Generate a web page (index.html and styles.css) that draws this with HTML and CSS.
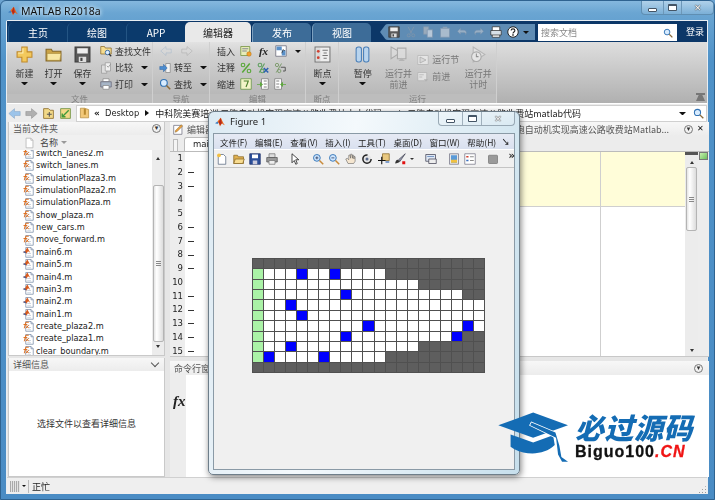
FILE: index.html
```html
<!DOCTYPE html>
<html lang="zh">
<head>
<meta charset="utf-8">
<title>MATLAB R2018a</title>
<link rel="stylesheet" href="styles.css">
</head>
<body>
<svg class="defs" xmlns="http://www.w3.org/2000/svg">
  <symbol id="logo" viewBox="0 0 16 16"><path d="M0 10l4-3 2 1.500L4 11z" fill="#3f7fc0"/><path d="M4 7l5-6c2 2 3 8 7 12-3-1-4-2-5-3l-3 5c-1-3-2-6-4-8z" fill="#e8641c"/><path d="M9 1c-1 3-2 5-3 7.500L8 13l3-3C10 7 10 4 9 1z" fill="#b5291a"/></symbol>
  <symbol id="plus" viewBox="0 0 16 16"><path d="M5.500 1h5v4.500H15v5h-4.500V15h-5v-4.500H1v-5h4.500z" fill="#f3c95c" stroke="#c08a2c"/><path d="M6.500 2v4.500H2" fill="none" stroke="#fdf0b8"/></symbol>
  <symbol id="folder" viewBox="0 0 16 16"><path d="M1 3h5l1 2h8v9H1z" fill="#caa347" stroke="#85682a"/><path d="M2 7h13l-1 6.500H2z" fill="#f8e7a4" stroke="#a98a3c" stroke-width=".6"/></symbol>
  <symbol id="floppy" viewBox="0 0 16 16"><path d="M1 1h14v14H1z" fill="#5a5a5a" stroke="#3a3a3a"/><path d="M3 2h10v5H3z" fill="#eee"/><path d="M4.500 10h7v5h-7z" fill="#ddd"/><path d="M6 11h2v3H6z" fill="#444"/></symbol>
  <symbol id="findfile" viewBox="0 0 16 16"><path d="M1 2h5l1 2h8v8H1z" fill="#f5dc90" stroke="#8a6a28"/><circle cx="10" cy="10" r="3" fill="#dfefff" stroke="#3c6ea8" stroke-width="1.300"/><path d="M12 12l3 3" stroke="#333" stroke-width="1.600"/></symbol>
  <symbol id="compare" viewBox="0 0 16 16"><path d="M2 4h7v11H2z" fill="#ddd" stroke="#999"/><path d="M7 1h7v11H7z" fill="#f0f0f0" stroke="#999"/><path d="M9 5l2 2 3-4" fill="none" stroke="#888"/></symbol>
  <symbol id="printer" viewBox="0 0 16 16"><path d="M4 1h8v4H4z" fill="#fff" stroke="#888"/><path d="M1 5h14v7H1z" fill="#a7b5c6" stroke="#667"/><path d="M4 10h8v5H4z" fill="#fff" stroke="#888"/></symbol>
  <symbol id="back" viewBox="0 0 16 16"><path d="M1 8l7-6v3.500h7v5H8V14z" fill="currentColor" stroke="#7f9fc0" stroke-width=".6"/></symbol>
  <symbol id="fwd" viewBox="0 0 16 16"><path d="M15 8L8 2v3.500H1v5h7V14z" fill="currentColor" stroke="#888" stroke-width=".6"/></symbol>
  <symbol id="goto" viewBox="0 0 16 16"><path d="M9 2h6v12H9z" fill="#f4f4f4" stroke="#888"/><path d="M1 6h5V3l5 5-5 5v-3H1z" fill="#4b8cd0" stroke="#2a5f9c" stroke-width=".6"/></symbol>
  <symbol id="mag" viewBox="0 0 16 16"><circle cx="6.500" cy="6.500" r="4.500" fill="#d8ecff" stroke="#3273b5" stroke-width="1.500"/><path d="M10 10l5 5" stroke="#8a6a3a" stroke-width="2"/></symbol>
  <symbol id="insert" viewBox="0 0 16 16"><path d="M1 2h12v12H1z" fill="#e6ecb8" stroke="#6f8f3a"/><path d="M3 5h8M3 8h6" stroke="#668" fill="none"/><circle cx="12" cy="12" r="3" fill="#f2a02c" stroke="#b06a10" stroke-width=".6"/></symbol>
  <symbol id="block" viewBox="0 0 16 16"><path d="M1 1h14v14H1z" fill="#fff" stroke="#667"/><path d="M2 2h7v5H2zM9 7h5v7H9z" fill="#5a90c8"/><path d="M9 11l2-5 2 2" stroke="#333" fill="none"/></symbol>
  <symbol id="pct" viewBox="0 0 16 16"><circle cx="4" cy="4" r="2.400" fill="none" stroke="currentColor" stroke-width="1.500"/><circle cx="12" cy="12" r="2.400" fill="none" stroke="currentColor" stroke-width="1.500"/><path d="M13 2L3 14" stroke="currentColor" stroke-width="2"/></symbol>
  <symbol id="pctx" viewBox="0 0 16 16"><circle cx="4" cy="4" r="2.400" fill="none" stroke="#5fa05f" stroke-width="1.400"/><circle cx="7" cy="12" r="2.400" fill="none" stroke="#5fa05f" stroke-width="1.400"/><path d="M10 2L3 14" stroke="#5fa05f" stroke-width="1.500"/><path d="M9 8l6 6m0-6l-6 6" stroke="#2c62b0" stroke-width="2"/></symbol>
  <symbol id="wrap" viewBox="0 0 16 16"><circle cx="4" cy="4" r="2.200" fill="none" stroke="#7a9a6a" stroke-width="1.200"/><circle cx="7" cy="12" r="2.200" fill="none" stroke="#7a9a6a" stroke-width="1.200"/><path d="M10 2L3 14" stroke="#7a9a6a" stroke-width="1.300"/><path d="M9 7h6v5h-3" fill="none" stroke="#555" stroke-width="1.300"/></symbol>
  <symbol id="smart" viewBox="0 0 16 16"><path d="M1 1h14v14H1z" fill="#f2f4c8" stroke="#5f8f3f"/><path d="M5 4h6l-1 3-2 5" fill="none" stroke="#4a7f2a" stroke-width="1.500"/></symbol>
  <symbol id="indent" viewBox="0 0 16 16"><path d="M6 1h9v14H6z" fill="#fff" stroke="#777"/><path d="M9 4h4M9 8h4M9 12h4" stroke="#555"/><path d="M0 8h4V5l4 3.500L4 12V9H0z" fill="#5fa83f"/></symbol>
  <symbol id="outdent" viewBox="0 0 16 16"><path d="M1 1h9v14H1z" fill="#fff" stroke="#777"/><path d="M3 4h4M3 8h4M3 12h4" stroke="#555"/><path d="M16 8h-4V5L8 8.500l4 3.500V9h4z" fill="#5fa83f"/></symbol>
  <symbol id="bp" viewBox="0 0 16 16"><path d="M1 1h14v14H1z" fill="#eee" stroke="#777"/><path d="M2 2h4v12H2z" fill="#d8d8d8"/><circle cx="4" cy="5" r="1.300" fill="#d04030"/><circle cx="4" cy="11" r="1.300" fill="#d04030"/><path d="M8 4h5M9 6.500h3M8 9h5M9 11.500h3" stroke="#777"/></symbol>
  <symbol id="pause" viewBox="0 0 16 16"><rect x="2" y="1" width="5" height="14" rx="2" fill="#b8d4ee" stroke="#4a7fb8"/><rect x="9" y="1" width="5" height="14" rx="2" fill="#b8d4ee" stroke="#4a7fb8"/></symbol>
  <symbol id="runadv" viewBox="0 0 16 16"><path d="M1 1l9 5-9 6z" fill="#dcdcdc" stroke="#999"/><path d="M7 2h8v10H7z" fill="#ddd" stroke="#999"/><path d="M8 14h6l-3-3z" fill="#aaa"/></symbol>
  <symbol id="runsec" viewBox="0 0 16 16"><path d="M1 2h14v12H1z" fill="#eee" stroke="#aaa"/><path d="M4 4l8 4-8 4z" fill="#ddd" stroke="#999"/></symbol>
  <symbol id="advance" viewBox="0 0 16 16"><path d="M1 2h12v11H1z" fill="#eee" stroke="#aaa"/><path d="M3 5h6M3 8h4" stroke="#aaa"/><path d="M9 11h6l-3 3z" fill="#aaa"/></symbol>
  <symbol id="runtime" viewBox="0 0 16 16"><path d="M3 1l11 7-11 7z" fill="#e6e6e6" stroke="#aaa"/><circle cx="6" cy="10" r="4.500" fill="#eee" stroke="#999"/><path d="M6 7v3h2" fill="none" stroke="#777"/></symbol>
  <symbol id="cut" viewBox="0 0 16 16"><path d="M4 1l5 9M12 1L7 10" stroke="#7c94ad" stroke-width="1.300"/><circle cx="5" cy="12.500" r="2" fill="none" stroke="#7c94ad" stroke-width="1.300"/><circle cx="11" cy="12.500" r="2" fill="none" stroke="#7c94ad" stroke-width="1.300"/></symbol>
  <symbol id="copy" viewBox="0 0 16 16"><path d="M2 1h7v10H2z" fill="#9ab" stroke="#7c94ad"/><path d="M7 5h7v10H7z" fill="#b7c7d8" stroke="#7c94ad"/></symbol>
  <symbol id="paste" viewBox="0 0 16 16"><path d="M2 3h12v12H2z" fill="#a9bbcd" stroke="#7c94ad"/><path d="M5 1h6v3H5z" fill="#8ba0b5"/></symbol>
  <symbol id="undo" viewBox="0 0 16 16"><path d="M6 3L2 7l4 4V8.500h4c2 0 3 1 3 3 2-4 0-6-3-6H6z" fill="#9ab0c6" stroke="#7c94ad" stroke-width=".6"/></symbol>
  <symbol id="redo" viewBox="0 0 16 16"><path d="M10 3l4 4-4 4V8.500H6c-2 0-3 1-3 3-2-4 0-6 3-6h4z" fill="#9ab0c6" stroke="#7c94ad" stroke-width=".6"/></symbol>
  <symbol id="qaprint" viewBox="0 0 16 16"><path d="M3 1h10v14H3z" fill="#fff" stroke="#333"/><path d="M1 6h14v6H1z" fill="#d8e0e8" stroke="#333"/></symbol>
  <symbol id="help" viewBox="0 0 16 16"><circle cx="8" cy="8" r="7" fill="#fff" stroke="#222" stroke-width="1.300"/><path d="M5.500 6c0-3 5-3 5 0 0 2-2.500 2-2.500 4" fill="none" stroke="#222" stroke-width="1.500"/><path d="M7 11h2v2H7z" fill="#222"/></symbol>
  <symbol id="up" viewBox="0 0 16 16"><path d="M2 2h6l2 2h4v10H2z" fill="#f2d987" stroke="#8a6a28"/><path d="M6 9h6M9 6v6" stroke="#555" stroke-width="1.300"/></symbol>
  <symbol id="tree" viewBox="0 0 16 16"><path d="M2 2h12v12H2z" fill="#f2d987" stroke="#6a8f3a"/><path d="M12 4L4 12M4 8v4h4" fill="none" stroke="#3f9a3a" stroke-width="1.700"/></symbol>
  <symbol id="crumb" viewBox="0 0 16 16"><path d="M2 1h6l6 2v12H2z" fill="#f2c878" stroke="#b08838"/><path d="M7 1v10l2-1 1 1V2" fill="#b88a30"/></symbol>
  <symbol id="page" viewBox="0 0 16 16"><path d="M3 1h7l3 3v11H3z" fill="#fff" stroke="#aaa"/><path d="M10 1v3h3" fill="none" stroke="#aaa"/></symbol>
  <symbol id="mfn" viewBox="0 0 16 16"><path d="M5 2h7l3 3v10H5z" fill="#fff" stroke="#7a8ca8"/><path d="M12 2v3h3" fill="none" stroke="#7a8ca8"/><path d="M7 7h3M7 10h5M7 13h5" stroke="#b9c5d6"/><path d="M3 11l2-8h4M2 6h5M5 7l4 4m0-4l-4 4" fill="none" stroke="#e07020" stroke-width="1.300"/></symbol>
  <symbol id="msc" viewBox="0 0 16 16"><path d="M5 2h7l3 3v10H5z" fill="#fff" stroke="#7a8ca8"/><path d="M12 2v3h3" fill="none" stroke="#7a8ca8"/><path d="M7 10h5M7 13h5" stroke="#b9c5d6"/><path d="M1 8l3-1 3-5c1 1 2 4 4 7L8 7l-2 3z" fill="#d85a1c"/><path d="M1 8l3-1 2 3z" fill="#2a5fb0"/></symbol>
  <symbol id="edit" viewBox="0 0 16 16"><path d="M1 2h12v13H1z" fill="#fff" stroke="#667"/><path d="M3 12l1-3 8-8 2 2-8 8z" fill="#e8a040" stroke="#7a5a20" stroke-width=".6"/></symbol>
  <symbol id="fnew" viewBox="0 0 16 16"><path d="M3 2h7l3 3v10H3z" fill="#fff" stroke="#5a6a80"/><circle cx="4" cy="3" r="2.500" fill="#f4c040"/></symbol>
  <symbol id="fopen" viewBox="0 0 16 16"><path d="M1 3h5l1 2h7v9H1z" fill="#e0b050" stroke="#8a6a28"/><path d="M1 14l2-6h12l-2 6z" fill="#f8dc90" stroke="#8a6a28"/></symbol>
  <symbol id="fsave" viewBox="0 0 16 16"><path d="M1 1h14v14H1z" fill="#2c4f9a" stroke="#1c2f68"/><path d="M4 2h8v5H4z" fill="#fff"/><path d="M5 10h6v5H5z" fill="#ccd"/></symbol>
  <symbol id="fprint" viewBox="0 0 16 16"><path d="M4 1h8v5H4z" fill="#ddd" stroke="#777"/><path d="M1 6h14v6H1z" fill="#9a9a9a" stroke="#555"/><path d="M4 10h8v5H4z" fill="#eee" stroke="#777"/></symbol>
  <symbol id="farrow" viewBox="0 0 16 16"><path d="M4 1v12l3-3 2 5 2-1-2-5h4z" fill="#fff" stroke="#111"/></symbol>
  <symbol id="zin" viewBox="0 0 16 16"><circle cx="6.500" cy="6.500" r="4.500" fill="#cfe6ff" stroke="#3a78b8" stroke-width="1.300"/><path d="M4.500 6.500h4M6.500 4.500v4" stroke="#235" stroke-width="1"/><path d="M10 10l5 5" stroke="#c88a3a" stroke-width="2"/></symbol>
  <symbol id="zout" viewBox="0 0 16 16"><circle cx="6.500" cy="6.500" r="4.500" fill="#cfe6ff" stroke="#3a78b8" stroke-width="1.300"/><path d="M4.500 6.500h4" stroke="#235" stroke-width="1"/><path d="M10 10l5 5" stroke="#c88a3a" stroke-width="2"/></symbol>
  <symbol id="hand" viewBox="0 0 16 16"><path d="M4 14L1 8l2-1 2 2V3l1.500-.5L7.500 7V1.500h1.500L10 7V2.500l1.500.5L12 8V4.500l1.500.5V11l-2 3z" fill="#f5e6d0" stroke="#555" stroke-width=".7"/></symbol>
  <symbol id="rot" viewBox="0 0 16 16"><circle cx="8" cy="8" r="5.500" fill="#e4e4e4" stroke="#222" stroke-width="2" stroke-dasharray="26 8"/><circle cx="8" cy="8" r="2" fill="#5a6a8a"/></symbol>
  <symbol id="cursor" viewBox="0 0 16 16"><path d="M6 1h9v9H6z" fill="#e8c880" stroke="#8a6a28"/><path d="M5 5v10M0 10h10" stroke="#111" stroke-width="1.500"/><path d="M10 12h5" stroke="#2a5fb0" stroke-width="1.500"/></symbol>
  <symbol id="brush" viewBox="0 0 16 16"><path d="M15 1L6 9l2 2z" fill="#9aa0b0" stroke="#445"/><path d="M5 9c-2 0-3 2-3.500 5C4 13.500 7 13 8 11z" fill="#333"/><path d="M11 11h4v4h-4z" fill="#e01010"/></symbol>
  <symbol id="link" viewBox="0 0 16 16"><path d="M1 2h13v9H1z" fill="#dfe8f4" stroke="#445"/><path d="M3 4h9v1H3z" fill="#5a7fb8"/><path d="M5 8h10v6H5z" fill="#eee" stroke="#445"/></symbol>
  <symbol id="cbar" viewBox="0 0 16 16"><path d="M2 1h12v14H2z" fill="#e8e8e8" stroke="#778"/><path d="M4 3h8v10H4z" fill="#5a9ad8"/><path d="M4 9h8v4H4z" fill="#f0c040"/></symbol>
  <symbol id="legend" viewBox="0 0 16 16"><path d="M1 1h14v14H1z" fill="#fff" stroke="#778"/><path d="M3 4h3v2H3z" fill="#d04030"/><path d="M3 9h3v2H3z" fill="#3a70c0"/><path d="M8 5h5M8 10h5" stroke="#666"/></symbol>
  <symbol id="plot" viewBox="0 0 16 16"><rect x="2" y="3" width="12" height="11" rx="1" fill="#9a9a9a" stroke="#777"/></symbol>
</svg>

<div class="window">
  <header class="titlebar">
    <svg class="title-logo"><use href="#logo"/></svg>
    <span class="title-text">MATLAB R2018a</span>
    <div class="controls main-controls"><span class="c-min"><b></b></span><span class="c-max"><b></b></span><span class="c-close">✕</span></div>
  </header>

  <div class="client">
    <nav class="tabs">
      <span class="tab">主页</span><span class="tab">绘图</span><span class="tab">APP</span><span class="tab active">编辑器</span><span class="tab light">发布</span><span class="tab light">视图</span>
      <div class="qa">
        <svg class="qi"><use href="#floppy"/></svg><svg class="qi"><use href="#cut"/></svg><svg class="qi"><use href="#copy"/></svg><svg class="qi"><use href="#paste"/></svg><svg class="qi"><use href="#undo"/></svg><svg class="qi"><use href="#redo"/></svg><svg class="qi"><use href="#qaprint"/></svg><svg class="qi"><use href="#help"/></svg><i class="tri qa-tri"></i>
      </div>
      <div class="search"><span>搜索文档</span><svg class="search-ic"><use href="#mag"/></svg></div>
      <span class="login">登录</span>
    </nav>

    <div class="ribbon">
      <section class="grp g-file">
        <div class="grp-body">
          <div class="big"><svg class="ic-l"><use href="#plus"/></svg><span>新建</span><i class="tri"></i></div>
          <div class="big"><svg class="ic-l"><use href="#folder"/></svg><span>打开</span><i class="tri"></i></div>
          <div class="big"><svg class="ic-l"><use href="#floppy"/></svg><span>保存</span><i class="tri"></i></div>
          <div class="smalls">
            <div class="sm"><svg class="ic-s"><use href="#findfile"/></svg><span>查找文件</span></div>
            <div class="sm"><svg class="ic-s"><use href="#compare"/></svg><span>比较</span><i class="tri tri-s"></i></div>
            <div class="sm"><svg class="ic-s"><use href="#printer"/></svg><span>打印</span><i class="tri tri-s"></i></div>
          </div>
        </div>
        <div class="grp-label">文件</div>
      </section>
      <section class="grp g-nav">
        <div class="grp-body">
          <div class="smalls">
            <div class="sm faded"><svg class="ic-s nav-a"><use href="#back"/></svg><svg class="ic-s nav-a"><use href="#fwd"/></svg></div>
            <div class="sm"><svg class="ic-s"><use href="#goto"/></svg><span>转至</span><i class="tri tri-s"></i></div>
            <div class="sm"><svg class="ic-s"><use href="#mag"/></svg><span>查找</span><i class="tri tri-s"></i></div>
          </div>
        </div>
        <div class="grp-label">导航</div>
      </section>
      <section class="grp g-edit">
        <div class="grp-body">
          <div class="smalls">
            <div class="sm"><span class="e-lab">插入</span><svg class="ic-s"><use href="#insert"/></svg><em class="fx-btn">fx</em><svg class="ic-s"><use href="#block"/></svg><i class="tri tri-e"></i></div>
            <div class="sm"><span class="e-lab">注释</span><svg class="ic-s pct"><use href="#pct"/></svg><svg class="ic-s"><use href="#pctx"/></svg><svg class="ic-s"><use href="#wrap"/></svg></div>
            <div class="sm"><span class="e-lab">缩进</span><svg class="ic-s"><use href="#smart"/></svg><svg class="ic-s"><use href="#indent"/></svg><svg class="ic-s"><use href="#outdent"/></svg></div>
          </div>
        </div>
        <div class="grp-label">编辑</div>
      </section>
      <section class="grp g-bp">
        <div class="grp-body">
          <div class="big"><svg class="ic-l"><use href="#bp"/></svg><span>断点</span><i class="tri"></i></div>
        </div>
        <div class="grp-label">断点</div>
      </section>
      <section class="grp g-run">
        <div class="grp-body">
          <div class="big wide"><svg class="ic-l"><use href="#pause"/></svg><span>暂停</span><i class="tri"></i></div>
          <div class="big wide off"><svg class="ic-l"><use href="#runadv"/></svg><span>运行并</span><span>前进</span></div>
          <div class="smalls run-s off">
            <div class="sm"><svg class="ic-s"><use href="#runsec"/></svg><span>运行节</span></div>
            <div class="sm"><svg class="ic-s"><use href="#advance"/></svg><span>前进</span></div>
          </div>
          <div class="big wide off"><svg class="ic-l"><use href="#runtime"/></svg><span>运行并</span><span>计时</span></div>
        </div>
        <div class="grp-label">运行</div>
      </section>
      <div class="ribbon-rest"><span class="collapse"></span></div>
    </div>

    <div class="addr">
      <svg class="nav-ic back-ic"><use href="#back"/></svg><svg class="nav-ic fwd-ic"><use href="#fwd"/></svg><svg class="nav-ic"><use href="#up"/></svg><svg class="nav-ic"><use href="#tree"/></svg>
      <div class="path">
        <svg class="crumb"><use href="#crumb"/></svg>
        <span class="p-raq">«</span><span class="p-item">Desktop</span><i class="p-tri"></i>
        <span class="p-long">中科院美赛培训 元胞自动机实现高速公路收费站小小代码</span><i class="p-tri"></i>
        <span class="p-last">元胞自动机实现高速公路收费站matlab代码</span>
        <i class="tri path-tri"></i>
        <svg class="path-go"><use href="#mag"/></svg>
      </div>
    </div>

    <main class="panes">
      <div class="left">
        <section class="files">
          <div class="p-head"><span>当前文件夹</span><span class="round">▾</span></div>
          <div class="col-head"><svg class="col-ic"><use href="#page"/></svg><span>名称</span><i class="sort"></i></div>
          <div class="list-wrap">
            <ul class="list">
              <li><svg><use href="#mfn"/></svg>switch_lanes2.m</li>
              <li><svg><use href="#mfn"/></svg>switch_lanes.m</li>
              <li><svg><use href="#mfn"/></svg>simulationPlaza3.m</li>
              <li><svg><use href="#mfn"/></svg>simulationPlaza2.m</li>
              <li><svg><use href="#mfn"/></svg>simulationPlaza.m</li>
              <li><svg><use href="#mfn"/></svg>show_plaza.m</li>
              <li><svg><use href="#mfn"/></svg>new_cars.m</li>
              <li><svg><use href="#mfn"/></svg>move_forward.m</li>
              <li><svg><use href="#msc"/></svg>main6.m</li>
              <li><svg><use href="#msc"/></svg>main5.m</li>
              <li><svg><use href="#msc"/></svg>main4.m</li>
              <li><svg><use href="#msc"/></svg>main3.m</li>
              <li><svg><use href="#msc"/></svg>main2.m</li>
              <li><svg><use href="#msc"/></svg>main1.m</li>
              <li><svg><use href="#mfn"/></svg>create_plaza2.m</li>
              <li><svg><use href="#mfn"/></svg>create_plaza1.m</li>
              <li><svg><use href="#mfn"/></svg>clear_boundary.m</li>
            </ul>
            <div class="sb sb-files"><i class="ar-up"></i><div class="thumb"><span></span></div><i class="ar-dn"></i></div>
          </div>
        </section>
        <section class="details">
          <div class="p-head"><span>详细信息</span><span class="chev"></span></div>
          <div class="details-body">选择文件以查看详细信息</div>
        </section>
      </div>

      <div class="right">
        <section class="editor">
          <div class="p-head ed-head">
            <svg class="ed-ic"><use href="#edit"/></svg><span>编辑器</span>
            <span class="ed-title">胞自动机实现高速公路收费站Matlab...</span>
            <span class="round">▾</span><span class="ed-x">✕</span>
          </div>
          <div class="ed-tabs"><span class="ed-tab-stub"></span><span class="ed-tab">main6.m</span></div>
          <div class="ed-body">
            <ol class="gutter">
              <li><span>1</span></li><li><span>2</span><b></b></li><li><span>3</span><b></b></li><li><span>4</span></li><li><span>5</span></li><li><span>6</span><b></b></li><li><span>7</span><b></b></li><li><span>8</span><b></b></li><li><span>9</span><b></b></li><li><span>10</span></li><li><span>11</span><b></b></li><li><span>12</span><b></b></li><li><span>13</span><b></b></li><li><span>14</span><b></b></li><li><span>15</span><b></b></li>
            </ol>
            <div class="sheet"><div class="cell yellow"></div><div class="cell yellow"></div><div class="cell"></div><div class="cell"></div></div>
            <div class="sb-col"><i class="sb-cap"></i><div class="sb sb-ed"><i class="ar-up"></i><div class="thumb"><span></span></div><i class="ar-dn"></i></div></div>
            <div class="mark-col"><i class="mark"></i></div>
          </div>
        </section>
        <section class="command">
          <div class="p-head cmd-head"><span>命令行窗口</span><span class="round">▾</span></div>
          <div class="cmd-body"><div class="cmd-gutter"><em>fx</em><i class="cmd-dot"></i></div><div class="cmd-main"></div></div>
        </section>
      </div>
    </main>

    <footer class="status">
      <span class="grip"></span><i class="tri grip-tri"></i><span class="status-text">正忙</span><span class="resize"></span>
    </footer>
  </div>

  <section class="figure">
    <header class="fig-title">
      <svg class="fig-logo"><use href="#logo"/></svg><span>Figure 1</span>
      <div class="controls fig-controls"><span class="c-min"><b></b></span><span class="c-max"><b></b></span><span class="c-close">✕</span></div>
    </header>
    <div class="fig-inner">
      <div class="fig-menu"><span>文件(F)</span><span>编辑(E)</span><span>查看(V)</span><span>插入(I)</span><span>工具(T)</span><span>桌面(D)</span><span>窗口(W)</span><span>帮助(H)</span><span class="m-more">↘</span></div>
      <div class="fig-tools">
        <svg><use href="#fnew"/></svg><svg><use href="#fopen"/></svg><svg><use href="#fsave"/></svg><svg><use href="#fprint"/></svg><u></u>
        <svg><use href="#farrow"/></svg><u></u>
        <svg><use href="#zin"/></svg><svg><use href="#zout"/></svg><svg><use href="#hand"/></svg><svg><use href="#rot"/></svg><svg><use href="#cursor"/></svg><svg><use href="#brush"/></svg><i class="tri tri-f"></i><u></u>
        <svg><use href="#link"/></svg><u></u>
        <svg><use href="#cbar"/></svg><svg><use href="#legend"/></svg><u></u>
        <svg><use href="#plot"/></svg><span class="t-more">»</span>
      </div>
      <div class="fig-canvas">
        <div class="plot">
          <s class="d"></s><s class="d"></s><s class="d"></s><s class="d"></s><s class="d"></s><s class="d"></s><s class="d"></s><s class="d"></s><s class="d"></s><s class="d"></s><s class="d"></s><s class="d"></s><s class="d"></s><s class="d"></s><s class="d"></s><s class="d"></s><s class="d"></s><s class="d"></s><s class="d"></s><s class="d"></s><s class="d"></s>
          <s class="g"></s><s></s><s></s><s></s><s class="b"></s><s></s><s></s><s class="b"></s><s></s><s></s><s></s><s></s><s class="d"></s><s class="d"></s><s class="d"></s><s class="d"></s><s class="d"></s><s class="d"></s><s class="d"></s><s class="d"></s><s class="d"></s>
          <s class="g"></s><s></s><s></s><s></s><s></s><s></s><s></s><s></s><s></s><s></s><s></s><s></s><s></s><s></s><s></s><s class="d"></s><s class="d"></s><s class="d"></s><s class="d"></s><s class="d"></s><s class="d"></s>
          <s class="g"></s><s></s><s></s><s></s><s></s><s></s><s></s><s></s><s class="b"></s><s></s><s></s><s></s><s></s><s></s><s></s><s></s><s></s><s></s><s></s><s class="d"></s><s class="d"></s>
          <s class="g"></s><s></s><s></s><s class="b"></s><s></s><s></s><s></s><s></s><s></s><s></s><s></s><s></s><s></s><s></s><s></s><s></s><s></s><s></s><s></s><s></s><s></s>
          <s class="g"></s><s></s><s></s><s></s><s class="b"></s><s></s><s></s><s></s><s></s><s></s><s></s><s></s><s></s><s></s><s></s><s></s><s></s><s></s><s></s><s></s><s></s>
          <s class="g"></s><s></s><s></s><s></s><s></s><s></s><s></s><s></s><s></s><s></s><s class="b"></s><s></s><s></s><s></s><s></s><s></s><s></s><s></s><s></s><s class="b"></s><s></s>
          <s class="g"></s><s></s><s></s><s></s><s></s><s></s><s></s><s></s><s class="b"></s><s></s><s></s><s></s><s></s><s></s><s></s><s></s><s></s><s></s><s class="b"></s><s class="d"></s><s class="d"></s>
          <s class="g"></s><s></s><s></s><s class="b"></s><s></s><s></s><s></s><s></s><s></s><s></s><s></s><s></s><s></s><s></s><s></s><s class="d"></s><s class="d"></s><s class="d"></s><s class="d"></s><s class="d"></s><s class="d"></s>
          <s class="g"></s><s class="b"></s><s></s><s></s><s></s><s></s><s class="b"></s><s></s><s></s><s></s><s></s><s></s><s class="d"></s><s class="d"></s><s class="d"></s><s class="d"></s><s class="d"></s><s class="d"></s><s class="d"></s><s class="d"></s><s class="d"></s>
          <s class="d"></s><s class="d"></s><s class="d"></s><s class="d"></s><s class="d"></s><s class="d"></s><s class="d"></s><s class="d"></s><s class="d"></s><s class="d"></s><s class="d"></s><s class="d"></s><s class="d"></s><s class="d"></s><s class="d"></s><s class="d"></s><s class="d"></s><s class="d"></s><s class="d"></s><s class="d"></s><s class="d"></s>
        </div>
      </div>
    </div>
  </section>

  <aside class="brand">
    <svg class="hat" viewBox="0 0 250 200"><path d="M25 75L130 37l105 38-105 38z" fill="#146cb4"/><path d="M62 103l68 24 60-22 5 30c-35 35-100 30-133 5z" fill="#146cb4"/><path d="M125 67l72 30 12 40 6 34 20 14h-18l-12-22-6-50-78-38z" fill="#146cb4" stroke="#fff" stroke-width="5" paint-order="stroke"/></svg>
    <div class="brand-text"><div class="brand-cn">必过源码</div><div class="brand-en">Biguo100<span>.CN</span></div></div>
  </aside>
</div>
</body>
</html>
```
FILE: styles.css
```css
* { box-sizing: border-box; }
html, body { margin: 0; padding: 0; }
body { width: 715px; height: 500px; overflow: hidden; background: #6ba3d0; font-family: "Noto Sans CJK SC", "DejaVu Sans", sans-serif; font-size: 9px; color: #333; }
.defs { display: none; }
svg { display: block; flex: none; overflow: visible; }
ul, ol { list-style: none; margin: 0; padding: 0; }
i, em, u, s { display: block; }

.window { position: relative; width: 715px; height: 500px; padding: 0 6px 7px 5px; border: 1px solid #2f6390; border-radius: 6px 6px 0 0; background: linear-gradient(#85b8de 0, #6aa5d2 12px, #4f92c8 60px, #4a8cc4 100%); overflow: hidden; filter: blur(.3px); }

.titlebar { height: 19px; display: flex; align-items: flex-start; padding-left: 2px; }
.title-logo { width: 10px; height: 10px; margin-top: 5px; }
.title-text { margin-left: 3px; margin-top: 2px; font: 10.5px/16px "Noto Sans", sans-serif; color: #111; text-shadow: 0 0 4px #dff0fb, 0 0 4px #dff0fb; }

.controls { margin-left: auto; display: flex; height: 14px; border: 1px solid #5f8eb2; border-top: 0; border-radius: 0 0 4px 4px; background: linear-gradient(rgba(255,255,255,.35), rgba(255,255,255,.12)); }
.controls span { display: flex; align-items: center; justify-content: center; border-right: 1px solid #6d97b8; height: 100%; color: #456; }
.controls .c-min { width: 22px; }
.controls .c-max { width: 19px; }
.controls .c-close { width: 31px; border-right: 0; font-size: 9px; font-weight: bold; color: #fff; text-shadow: 0 0 1px #222, 0 0 1px #222; font-family: "DejaVu Sans", sans-serif; }
.c-min b { width: 9px; height: 4px; margin-top: 4px; border: 1px solid #456; background: #fff; border-radius: 1px; }
.c-max b { width: 9px; height: 7px; border: 1px solid #456; border-top-width: 2px; background: #fff; border-radius: 1px; }
.main-controls { margin-right: -6px; width: 73px; }

.client { height: 474px; display: flex; flex-direction: column; background: #e9e9e9; border: 1px solid #e8eef3; border-width: 1px 1px 0 1px; border-top-left-radius: 2px; }

.tabs { height: 21px; flex: none; display: flex; align-items: flex-end; background: #0c3768; padding-left: 1px; }
.tab { width: 59px; height: 19px; display: flex; align-items: center; justify-content: center; color: #fff; font-size: 10px; border-radius: 5px 5px 0 0; background: #0b3a6c; border-left: 1px solid #245584; }
.tab.active { width: 66px; height: 20px; background: #e9e9e9; color: #222; border: 0; }
.tab.light { background: #3d6c98; border-left: 1px solid #7da0bf; margin-left: 1px; }
.qa { margin: 0 0 2px 9px; height: 16px; width: 155px; display: flex; align-items: center; gap: 5px; padding-left: 8px; background: #5f8cb4; border-radius: 8px 0 0 8px; clip-path: polygon(0 50%, 6px 0, 100% 0, 100% 100%, 6px 100%); }
.qi { width: 12px; height: 12px; }
.qa-tri { margin-left: -1px; }
.search { width: 139px; height: 17px; margin: 0 0 1px 3px; background: #fff; display: flex; align-items: center; justify-content: space-between; padding: 0 4px 0 3px; color: #888; }
.search-ic { width: 10px; height: 10px; }
.login { margin: 0 0 4px 9px; color: #fff; font-size: 9px; line-height: 12px; }

.ribbon { height: 61px; flex: none; display: flex; background: linear-gradient(#e2e2e2, #d2d2d2 20%, #b3b3b3 100%); }
.grp { display: flex; flex-direction: column; border-right: 1px solid #cfcfcf; }
.grp-body { height: 52px; display: flex; flex: none; }
.grp-label { height: 9px; line-height: 9px; text-align: center; color: #808080; font-size: 8.5px; background: #bdbdbd; }
.g-file { width: 146px; } .g-file .grp-body { padding-left: 3px; }
.g-file .smalls { margin-left: 3px; }
.g-nav { width: 57px; } .g-nav .smalls { margin-left: 6px; }
.g-edit { width: 96px; } .g-edit .smalls { margin-left: 7px; }
.g-bp { width: 33px; } .g-bp .big { margin-left: 2px; }
.g-run { width: 158px; } .g-run .grp-body { padding-left: 6px; }
.ribbon-rest { flex: 1; display: flex; align-items: flex-end; justify-content: flex-end; padding: 0 2px 2px 0; background: linear-gradient(#dedede, #b0b0b0); }
.collapse { width: 9px; height: 8px; clip-path: polygon(0 0, 100% 0, 100% 25%, 70% 25%, 100% 100%, 0 100%, 30% 25%, 0 25%); background-color: #777; }

.big { width: 29px; display: flex; flex-direction: column; align-items: center; padding-top: 4px; color: #333; line-height: 11px; }
.big span { display: block; white-space: nowrap; }
.ic-l { width: 17px; height: 17px; margin-bottom: 5px; }
.tri { width: 0; height: 0; flex: none; border: 3px solid transparent; border-top: 3px solid #111; border-bottom: 0; }
.big .tri { margin-top: 3px; width: 7px; }
.big.wide { width: 37px; }
.off, .off .sm { color: #777; }
.off svg { opacity: .75; }
.smalls { padding-top: 1px; display: flex; flex-direction: column; }
.sm { height: 16.500px; display: flex; align-items: center; gap: 3px; color: #333; white-space: nowrap; }
.ic-s { width: 12px; height: 12px; }
.tri-s { margin-left: 5px; width: 7px; }
.faded { gap: 5px; opacity: .65; }
.nav-a { color: #d9d9d9; width: 14px; }
.e-lab { width: 18px; margin-right: 2px; }
.sm .ic-s + .ic-s, .sm .fx-btn + .ic-s { margin-left: 2px; }
.fx-btn { width: 13px; margin-left: 2px; font: italic bold 11px/12px "Liberation Serif", serif; color: #222; text-align: center; }
.pct { color: #5aa83a; }
.tri-e { margin-left: 5px; }
.run-s { margin: 8px 1px 0 1px; width: 42px; }
.run-s .sm { height: 17px; }
.g-run .off svg { opacity: .7; }

.addr { height: 19px; flex: none; display: flex; align-items: center; gap: 3px; background: #ececec; border-top: 1px solid #fff; }
.nav-ic { width: 13px; height: 13px; margin-left: 1px; }
.back-ic { color: #9cc4ea; }
.fwd-ic { color: #b0b0b0; }
.path { flex: 1; height: 17px; margin-left: 1px; display: flex; align-items: center; background: #fff; border: 1px solid #d0d0d0; padding-left: 2px; font-size: 9px; color: #222; white-space: nowrap; }
.crumb { width: 11px; height: 14px; }
.p-raq { margin-left: 4px; width: 6px; font-family: "DejaVu Sans", sans-serif; font-weight: bold; }
.p-item { margin-left: 5px; font-family: "DejaVu Sans", sans-serif; font-size: 8.300px; }
.p-long { margin-left: 6px; width: 238px; overflow: hidden; }
.p-last { margin-left: 4px; }
.p-tri { width: 0; height: 0; margin-left: 6px; border: 3px solid transparent; border-left: 4px solid #111; border-right: 0; }
.path-tri { margin-left: auto; margin-right: 7px; width: 7px; }
.path-go { width: 11px; height: 11px; margin-right: 2px; }

.panes { flex: 1; min-height: 0; display: flex; padding-left: 1px; background: #e6e6e6; }
.left { width: 157px; display: flex; flex-direction: column; flex: none; gap: 2px; }
.right { margin-left: 5px; width: 539px; flex: none; display: flex; flex-direction: column; gap: 4px; }
.p-head { height: 13px; flex: none; display: flex; align-items: center; justify-content: space-between; padding: 0 3px 0 4px; background: linear-gradient(#f7f7f7, #ececec); color: #555; line-height: 13px; }
.round { width: 9px; height: 9px; border: 1px solid #777; border-radius: 50%; font-size: 7px; line-height: 7px; text-align: center; color: #333; font-family: "DejaVu Sans", sans-serif; }
.chev { width: 6px; height: 6px; margin: -4px 3px 0 0; border: solid #555; border-width: 0 1.500px 1.500px 0; transform: rotate(45deg); }

.files { height: 234px; flex: none; display: flex; flex-direction: column; border: 1px solid #c9c9c9; border-top: 0; background: #fff; }
.col-head { height: 15px; flex: none; display: flex; align-items: center; background: #f0f0f0; padding-left: 15px; color: #444; }
.col-ic { width: 11px; height: 12px; margin-right: 5px; }
.sort { width: 0; height: 0; margin-left: 3px; border: 3px solid transparent; border-top: 3px solid #999; border-bottom: 0; }
.list-wrap { flex: 1; min-height: 0; display: flex; overflow: hidden; }
.list { flex: 1; margin-top: -3.200px; color: #222; font: 8.200px/12.380px "DejaVu Sans", sans-serif; }
.list li { height: 12.380px; display: flex; align-items: center; padding-left: 13px; gap: 2px; white-space: nowrap; }
.list svg { width: 12px; height: 12px; }

.sb { width: 12px; display: flex; flex-direction: column; align-items: center; background: #ececec; }
.sb-files { flex: none; }
.ar-up, .ar-dn { width: 0; height: 0; flex: none; border: 2.500px solid transparent; }
.ar-up { border-bottom: 3px solid #333; border-top: 0; }
.ar-dn { border-top: 3px solid #333; border-bottom: 0; }
.thumb { width: 11px; display: flex; align-items: center; justify-content: center; background: linear-gradient(90deg, #e4e4e4, #fff 30%, #dcdcdc); border: 1px solid #b4b4b4; border-radius: 2px; }
.thumb span { width: 5px; height: 5px; border-top: 1px solid #888; border-bottom: 1px solid #888; background: linear-gradient(#888, #888) center / 5px 1px no-repeat; }
.sb-files .ar-up { margin-top: 7px; }
.sb-files .thumb { height: 157px; margin-top: 25px; }
.sb-files .ar-dn { margin-top: 3px; }

.details { flex: 1; min-height: 0; display: flex; flex-direction: column; border: 1px solid #c9c9c9; border-top: 0; background: #fff; }
.details-body { flex: 1; display: flex; align-items: center; justify-content: center; color: #333; }

.editor { height: 235px; flex: none; display: flex; flex-direction: column; background: #fff; border-bottom: 1px solid #c8c8c8; }
.ed-head { justify-content: flex-start; padding-left: 3px; height: 14px; }
.ed-ic { width: 11px; height: 11px; margin-right: 3px; }
.ed-title { margin-left: auto; margin-right: 15px; }
.ed-head .round { margin-right: 4px; }
.ed-x { font: bold 8px/8px "DejaVu Sans", sans-serif; color: #111; width: 9px; }
.ed-tabs { height: 16px; flex: none; display: flex; align-items: flex-end; background: #ececec; border-bottom: 1px solid #bbb; }
.ed-tab-stub { width: 5px; height: 12px; margin-left: 3px; background: #f4f4f4; border: 1px solid #bbb; border-bottom: 0; }
.ed-tab { width: 60px; height: 14px; margin-left: 6px; padding-left: 8px; background: #fff; border: 1px solid #bbb; border-bottom: 0; border-radius: 3px 3px 0 0; font: 8.500px/13px "DejaVu Sans", sans-serif; color: #222; }
.ed-body { flex: 1; min-height: 0; display: flex; }
.gutter { width: 39px; flex: none; font: 8.500px/13.760px "DejaVu Sans", sans-serif; color: #222; background: linear-gradient(90deg, #ededed 15px, transparent 15px); }
.gutter li { height: 13.760px; display: flex; align-items: center; }
.gutter span { width: 13px; text-align: right; }
.gutter b { width: 6px; height: 1px; margin-left: 5px; background: #333; }
.sheet { width: 476px; flex: none; display: grid; grid-template-columns: 392px 84px; grid-template-rows: 55px 1fr; }
.cell { border-right: 1px solid #cfcfcf; border-bottom: 1px solid #cfcfcf; }
.cell:nth-child(2n) { border-right: 0; }
.cell:nth-child(n+3) { border-bottom: 0; }
.cell.yellow { background: #fffdd9; }
.sb-col { width: 13px; flex: none; display: flex; flex-direction: column; align-items: center; background: #ececec; }
.sb-cap { width: 13px; height: 3px; flex: none; background: #555; }
.sb-ed { flex: 1; }
.sb-ed .ar-up { margin-top: 6px; }
.sb-ed .thumb { height: 64px; margin-top: 3px; }
.sb-ed .ar-dn { margin-top: auto; margin-bottom: 4px; }
.mark-col { flex: 1; padding: 0 1px; background: #ededed; }
.mark { width: 9px; height: 8px; background: linear-gradient(135deg, #c8f0b0, #6cbf5c); border: 1px solid #777; }

.command { flex: 1; min-height: 0; display: flex; flex-direction: column; background: #fff; }
.cmd-head { padding-right: 6px; justify-content: space-between; height: 14px; }
.cmd-body { flex: 1; display: flex; }
.cmd-gutter { width: 16px; flex: none; background: #ededed; padding: 18px 0 0 3px; }
.cmd-gutter em { font: italic bold 15px/16px "Liberation Serif", serif; color: #222; }
.cmd-main { flex: 1; background: #fff; }

.status { height: 17px; flex: none; display: flex; align-items: center; padding-left: 3px; background: #efefef; border-top: 1px solid #d0d0d0; }
.grip { width: 10px; height: 11px; background: repeating-linear-gradient(90deg, #aaa 0 1px, #e4e4e4 1px 2px); }
.grip-tri { border-width: 2px; margin-left: 2px; width: 4px; }
.status-text { margin-left: 2px; padding-left: 3px; border-left: 1px solid #bbb; color: #222; font-size: 9px; line-height: 13px; }
.resize { margin: 6px 0 0 auto; width: 9px; height: 8px; background: radial-gradient(circle, #999 0 .8px, transparent 1px) 0 0 / 3px 3px; clip-path: polygon(100% 0, 100% 100%, 0 100%); }

.figure { position: absolute; left: 207px; top: 110px; width: 312px; height: 364px; padding: 0 4px 4px; display: flex; flex-direction: column; border: 1px solid #6e7e8a; border-radius: 6px 6px 5px 5px; background: linear-gradient(100deg, #dceaf3, #f4f9fc 40%, #c7dfec 100%); box-shadow: 1px 2px 6px rgba(0,0,0,.5); }
.fig-title { height: 21px; flex: none; display: flex; align-items: flex-start; color: #222; font: 9.500px/20px "Noto Sans", sans-serif; }
.fig-logo { width: 10px; height: 10px; margin: 5px 5px 0 2px; }
.fig-controls { width: 77px; margin-right: 0; border-color: #98a8b4; }
.fig-controls .c-min { width: 25px; } .fig-controls .c-max { width: 19px; }
.fig-controls .c-close { width: 33px; color: #fff; }
.fig-controls span { color: #667; border-color: #a0b0bc; }
.fig-inner { flex: 1; min-height: 0; display: flex; flex-direction: column; border: 1px solid #8a9aa6; background: #f0f0f0; }
.fig-menu { height: 16px; flex: none; display: flex; align-items: center; padding-left: 6px; gap: 7.500px; background: linear-gradient(#e6eaf4, #d9e0ef); border-bottom: 1px solid #fff; color: #222; font-size: 8.500px; white-space: nowrap; }
.m-more { margin-left: -2px; font-size: 8px; font-weight: bold; }
.fig-tools { height: 18px; flex: none; display: flex; align-items: center; gap: 4.500px; padding-left: 2px; background: #f0f0f0; border-bottom: 1px solid #c4c4c4; }
.fig-tools svg { width: 12px; height: 12px; }
.fig-tools u { width: 1px; height: 14px; background: #bbb; margin: 0 1px; }
.tri-f { margin-left: -1px; border-width: 2.500px; border-top-color: #333; }
.t-more { margin-left: 5px; font: bold 10px/10px "DejaVu Sans", sans-serif; margin-top: -5px; color: #222; }
.fig-canvas { flex: 1; min-height: 0; padding: 90px 0 0 38px; background: #f0f0f0; }
.plot { width: 233px; height: 115px; display: grid; grid-template-columns: repeat(21, 1fr); grid-template-rows: repeat(11, 1fr); gap: 1px; padding: 1px; background: #505050; }
.plot s { background: #fff; }
.plot .d { background: #5e5e5e; }
.plot .g { background: #aaf2a6; }
.plot .b { background: #0000ff; }

.brand { position: absolute; left: 489px; top: 399px; display: flex; }
.hat { width: 83px; height: 67px; }
.brand-text { margin-left: 2px; padding-top: 12px; }
.brand-cn { font: italic 900 29px/29px "Noto Sans CJK SC", sans-serif; color: #146cb4; letter-spacing: .5px; white-space: nowrap; }
.brand-en { margin-top: 3px; font: bold 16px/16px "Liberation Sans", sans-serif; color: #111; letter-spacing: 1px; white-space: nowrap; -webkit-text-stroke: .3px #111; }
.brand-en span { color: #f01414; font-style: italic; -webkit-text-stroke: .3px #f01414; }
```
